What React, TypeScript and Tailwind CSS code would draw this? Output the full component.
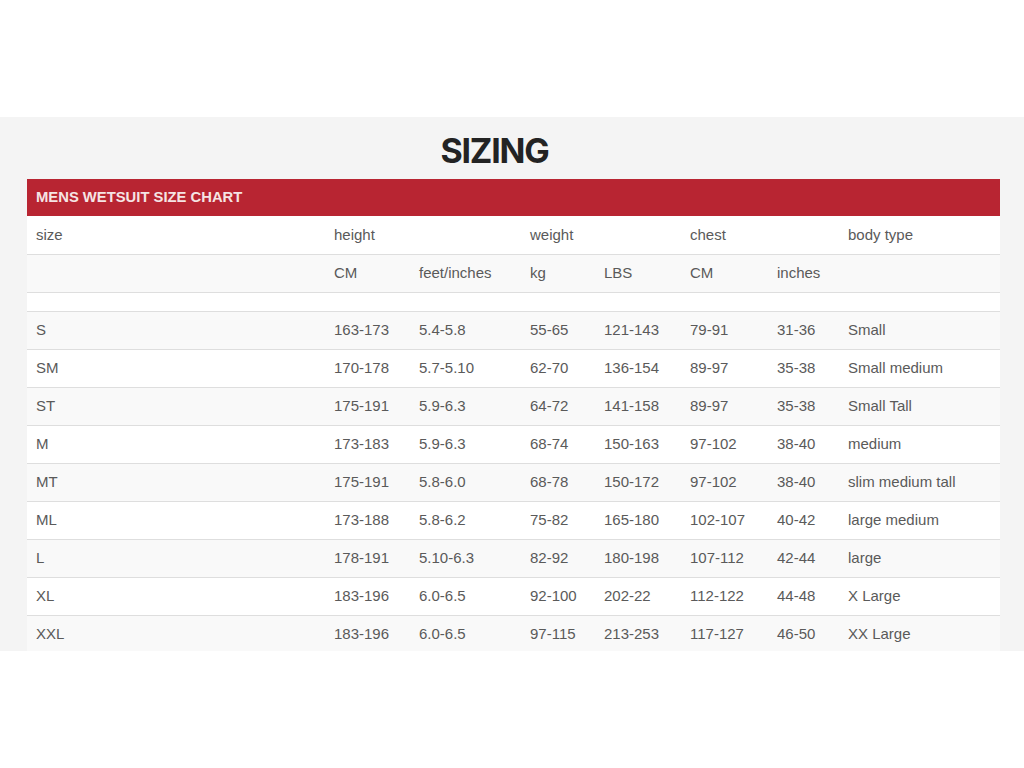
import React from 'react';

const COLS = [298, 85, 111, 74, 86, 87, 71, 161];

const ROWS: string[][] = [
  ['S', '163-173', '5.4-5.8', '55-65', '121-143', '79-91', '31-36', 'Small'],
  ['SM', '170-178', '5.7-5.10', '62-70', '136-154', '89-97', '35-38', 'Small medium'],
  ['ST', '175-191', '5.9-6.3', '64-72', '141-158', '89-97', '35-38', 'Small Tall'],
  ['M', '173-183', '5.9-6.3', '68-74', '150-163', '97-102', '38-40', 'medium'],
  ['MT', '175-191', '5.8-6.0', '68-78', '150-172', '97-102', '38-40', 'slim medium tall'],
  ['ML', '173-188', '5.8-6.2', '75-82', '165-180', '102-107', '40-42', 'large medium'],
  ['L', '178-191', '5.10-6.3', '82-92', '180-198', '107-112', '42-44', 'large'],
  ['XL', '183-196', '6.0-6.5', '92-100', '202-22', '112-122', '44-48', 'X Large'],
  ['XXL', '183-196', '6.0-6.5', '97-115', '213-253', '117-127', '46-50', 'XX Large'],
];

const HEAD = ['size', 'height', '', 'weight', '', 'chest', '', 'body type'];
const UNITS = ['', 'CM', 'feet/inches', 'kg', 'LBS', 'CM', 'inches', ''];

function Row({ cells, gray, h = 'h-[38px]' }: { cells: string[]; gray: boolean; h?: string }) {
  return (
    <tr className={`${h} border-t border-[#dedede] ${gray ? 'bg-[#f9f9f9]' : 'bg-white'}`}>
      {cells.map((c, i) => (
        <td key={i} className="px-[9px] align-middle whitespace-nowrap">
          {c}
        </td>
      ))}
    </tr>
  );
}

export default function App() {
  return (
    <div className="w-[1024px] h-[768px] bg-white" style={{ fontFamily: '"Liberation Sans", Arial, sans-serif' }}>
      <div className="h-[117px]" />
      <div className="h-[534px] bg-[#f4f4f4] overflow-hidden">
        <div className="h-[62px] flex items-center justify-center pr-[35px] pt-[4px]">
          <h1 className="text-[34px] font-bold tracking-[-1.2px] text-[#232323]" style={{ fontFamily: 'Inter, "Liberation Sans", sans-serif' }}>
            SIZING
          </h1>
        </div>
        <div className="ml-[27px] w-[973px]">
          <div className="h-[37px] bg-[#b82532] flex items-center px-[9px] text-[14.8px] font-bold text-[#f5e4e4]">
            MENS WETSUIT SIZE CHART
          </div>
          <table className="w-full table-fixed border-collapse text-[15px] text-[#5a5a5a]">
            <colgroup>
              {COLS.map((w, i) => (
                <col key={i} style={{ width: w }} />
              ))}
            </colgroup>
            <tbody>
              <tr className="h-[38px] bg-white">
                {HEAD.map((c, i) => (
                  <td key={i} className="px-[9px] align-middle whitespace-nowrap">
                    {c}
                  </td>
                ))}
              </tr>
              <Row cells={UNITS} gray />
              <Row cells={['', '', '', '', '', '', '', '']} gray={false} h="h-[19px]" />
              {ROWS.map((r, i) => (
                <Row key={r[0]} cells={r} gray={i % 2 === 0} />
              ))}
            </tbody>
          </table>
        </div>
      </div>
    </div>
  );
}
